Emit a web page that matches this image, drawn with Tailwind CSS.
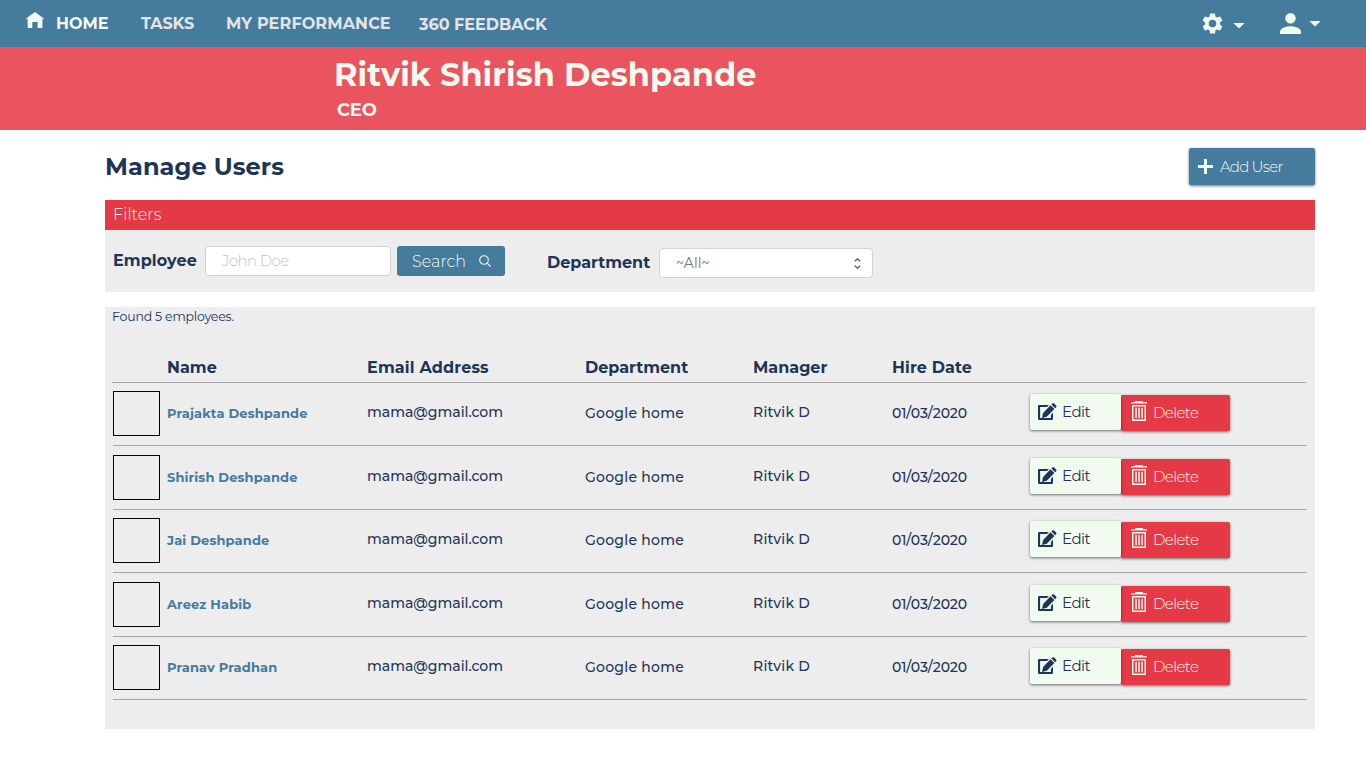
<!DOCTYPE html>
<html lang="en">
<head>
<meta charset="utf-8">
<title>Manage Users</title>
<script src="https://cdn.jsdelivr.net/npm/@tailwindcss/browser@4"></script>
</head>
<body class="h-[760px] overflow-hidden bg-white font-[Montserrat,Inter,sans-serif] text-[#1d3557]">
<nav class="flex h-[47px] items-start bg-[#457b9d] text-base leading-5 font-bold text-[#e4e4e4]">
  <a class="flex w-[141px] items-start pt-3 pl-[26px] text-[#f1faee]">
    <svg class="mr-3 h-[18px] w-[18px]" viewBox="0 0 18 18" fill="currentColor"><path d="M9 0 .4 6.3v1h1.3V16h4.6V10h5.3v6h4.8V7.3h1.2v-1z"/></svg>
    <span class="pt-[2px]">HOME</span>
  </a>
  <a class="w-[85px] pt-[14px] tracking-[-0.1px]">TASKS</a>
  <a class="w-[193px] pt-[14px] tracking-[0.15px]">MY PERFORMANCE</a>
  <a class="pt-[15px]">360 FEEDBACK</a>
  <div class="ml-auto flex items-start pr-[45px] text-[#f1faee]">
    <svg class="mt-[13px] h-[21px] w-[21px]" viewBox="2.2 2 19.6 20" fill="currentColor"><path d="M19.14 12.94c.04-.3.06-.61.06-.94s-.02-.64-.07-.94l2.03-1.58a.49.49 0 0 0 .12-.61l-1.92-3.32a.49.49 0 0 0-.59-.22l-2.39.96a7 7 0 0 0-1.62-.94l-.36-2.54a.48.48 0 0 0-.48-.41h-3.84a.47.47 0 0 0-.47.41l-.36 2.54a7.3 7.3 0 0 0-1.62.94l-2.39-.96a.48.48 0 0 0-.59.22L2.74 8.87a.47.47 0 0 0 .12.61l2.03 1.58a6 6 0 0 0 0 1.88l-2.03 1.58a.49.49 0 0 0-.12.61l1.92 3.32c.12.22.37.29.59.22l2.39-.96c.5.38 1.03.7 1.62.94l.36 2.54c.05.24.24.41.48.41h3.84c.24 0 .44-.17.47-.41l.36-2.54a7 7 0 0 0 1.62-.94l2.39.96c.22.08.47 0 .59-.22l1.92-3.32a.47.47 0 0 0-.12-.61zM12 15.6a3.6 3.6 0 1 1 0-7.2 3.6 3.6 0 0 1 0 7.2"/></svg>
    <svg class="mt-[23px] ml-[10px] h-[6px] w-3" viewBox="0 0 12 6" fill="currentColor"><path d="M.3 0h11.4L6 5.4z"/></svg>
    <svg class="mt-[13px] ml-[35px] h-[21px] w-[21px]" viewBox="0 0 21 21" fill="currentColor"><circle cx="10.5" cy="5.3" r="5.2"/><path d="M0 21v-2.4C0 15 7 13.2 10.5 13.2S21 15 21 18.6V21z"/></svg>
    <svg class="mt-[21px] ml-2 h-[6px] w-3" viewBox="0 0 12 6" fill="currentColor"><path d="M.3 0h11.4L6 5.4z"/></svg>
  </div>
</nav>
<header class="h-[83px] bg-[#e9545e] pt-2 text-[#f1faee]">
  <h1 class="pl-[334px] text-[32px] leading-10 font-bold tracking-[0.06px]">Ritvik Shirish Deshpande</h1>
  <p class="pt-[3px] pl-[337px] text-lg leading-6 font-bold tracking-[-0.2px]">CEO</p>
</header>
<main class="ml-[105px] w-[1210px]">
  <div class="flex h-[70px] items-start justify-between">
    <h2 class="pt-[21px] text-2xl leading-8 font-bold tracking-[0.1px]">Manage Users</h2>
    <button class="mt-[18px] flex h-[37px] w-[126px] items-start rounded-xs bg-[#457b9d] pt-[9px] pl-[9px] text-[15px] leading-5 font-[350] tracking-[-0.75px] text-[#f1faee] shadow-[0_1px_3px_rgba(0,0,0,0.55)]">
      <svg class="mt-[2px] mr-[7px] h-[15px] w-[15px]" viewBox="0 0 15 15" fill="currentColor"><path d="M6 0h3v6h6v3H9v6H6V9H0V6h6z"/></svg>
      <span>Add User</span>
    </button>
  </div>
  <section class="h-[92px] bg-[#ededed]">
    <h3 class="h-[30px] bg-[#e63946] pt-[5px] pl-2 text-base leading-5 font-[350] tracking-[0.1px] text-[#f1faee]">Filters</h3>
    <div class="flex items-start pl-2 text-base leading-5">
      <label class="w-[92px] pt-[21px] font-bold tracking-[0.1px]">Employee</label>
      <div class="mt-4 h-[30px] w-[186px] rounded border border-[#d0d3d6] bg-white pt-1 pl-4 text-[15px] leading-5 font-[350] tracking-[-0.6px] text-[#bfc4c7]">John Doe</div>
      <button class="mt-4 ml-[6px] flex h-[30px] w-[108px] items-start rounded-[3px] bg-[#457b9d] pt-[6px] pl-[15px] leading-5 font-[350] text-[#f1faee]">
        <span class="w-[67px] text-left">Search</span>
        <svg class="mt-[3px] h-3 w-3" viewBox="0 0 12 12" fill="none" stroke="currentColor" stroke-width="1.1"><circle cx="5" cy="5" r="4.3"/><path d="m8 8 3.7 3.7"/></svg>
      </button>
      <label class="ml-[42px] w-[112px] pt-[23px] font-bold">Department</label>
      <div class="mt-[18px] flex h-[30px] w-[214px] items-start justify-between rounded border border-[#d0d3d6] bg-white pt-1 pr-[11px] pl-4 text-sm leading-5 text-[#757575]">
        <span>~All~</span>
        <svg class="mt-[5px] h-[11px] w-[7px]" viewBox="0 0 7 11" fill="none" stroke="#555" stroke-width="1.2"><path d="m.8 3.3 2.7-2.5 2.7 2.5M.8 7.7l2.7 2.5 2.7-2.5"/></svg>
      </div>
    </div>
  </section>
  <section class="mt-[15px] h-[422px] bg-[#ededed] pt-[2px]">
    <p class="h-[49px] pl-[7px] text-[12.5px] leading-4 tracking-[-0.18px]">Found 5 employees.</p>
    <div class="ml-[7px] grid h-[25px] w-[1194px] grid-cols-[55px_200px_218px_168px_139px_1fr] border-b border-[#a6a6a6] text-base leading-5 font-bold">
      <span></span><span>Name</span><span class="tracking-[0.15px]">Email Address</span><span>Department</span><span>Manager</span><span class="tracking-[0.1px]">Hire Date</span>
    </div>
    <div id="rows" class="ml-2 w-[1194px]"></div>
  </section>
</main>
<script>
const names = ['Prajakta Deshpande', 'Shirish Deshpande', 'Jai Deshpande', 'Areez Habib', 'Pranav Pradhan'];
document.getElementById('rows').innerHTML = names.map(name => `
<div class="h-[63.5px]">
  <div class="flex h-[63px] items-start border-b border-[#a6a6a6] text-sm leading-5 font-medium">
    <div class="mt-2 mr-[7px] h-[45px] w-[47px] border border-black"></div>
    <a class="w-[200px] pt-5 text-[13px] font-bold tracking-[0.14px] text-[#457b9d]">${name}</a>
    <span class="w-[218px] pt-[19px]">mama@gmail.com</span>
    <span class="w-[168px] pt-5 tracking-[0.26px]">Google home</span>
    <span class="w-[139px] pt-[19px] tracking-[0.2px]">Ritvik D</span>
    <span class="w-[138px] pt-5 tracking-[-0.1px]">01/03/2020</span>
    <button class="z-10 mt-[11px] flex h-9 w-[91px] items-start rounded-xs bg-[#f1faee] pt-2 pl-2 text-[15px] font-normal tracking-[-0.5px] shadow-[0_1px_3px_rgba(0,0,0,0.55)]">
      <svg class="mt-px mr-[5px] h-[18px] w-[19px]" viewBox="0 0 19 18" fill="#1d3557"><path d="M11 2H1.2Q0 2 0 3.2v12.6Q0 17 1.2 17h12.6q1.2 0 1.2-1.2V9.8l-2.1 2.1V15H2.1V4.1H9z"/><path d="m12.5 2.2 3.9 3.9-7.6 7.6-4.8 1.2 1.1-5zM13.4 1.4l.8-.8q.9-.9 1.9 0l1.9 1.9q.9.9 0 1.9l-.9.9z"/></svg>
      <span>Edit</span>
    </button>
    <button class="mt-3 flex h-9 w-[109px] items-start rounded-xs bg-[#e63946] pt-2 pl-[10px] text-[15px] font-[350] tracking-[-0.6px] text-[#f1faee] shadow-[0_1px_3px_rgba(0,0,0,0.55)]">
      <svg class="-mt-[2px] mr-[6px] h-5 w-4" viewBox="0 0 16 20" fill="currentColor"><path d="M4 0h8v1.3h4V2.6H0V1.3h4z"/><path fill-rule="evenodd" d="M1 4h14v16H1zM2.5 5.5v13h11v-13z"/><path d="M4.3 6.8h1.5v10.4H4.3zM7.3 6.8h1.5v10.4H7.3zM10.3 6.8h1.5v10.4h-1.5z"/></svg>
      <span>Delete</span>
    </button>
  </div>
</div>`).join('');
</script>
</body>
</html>
